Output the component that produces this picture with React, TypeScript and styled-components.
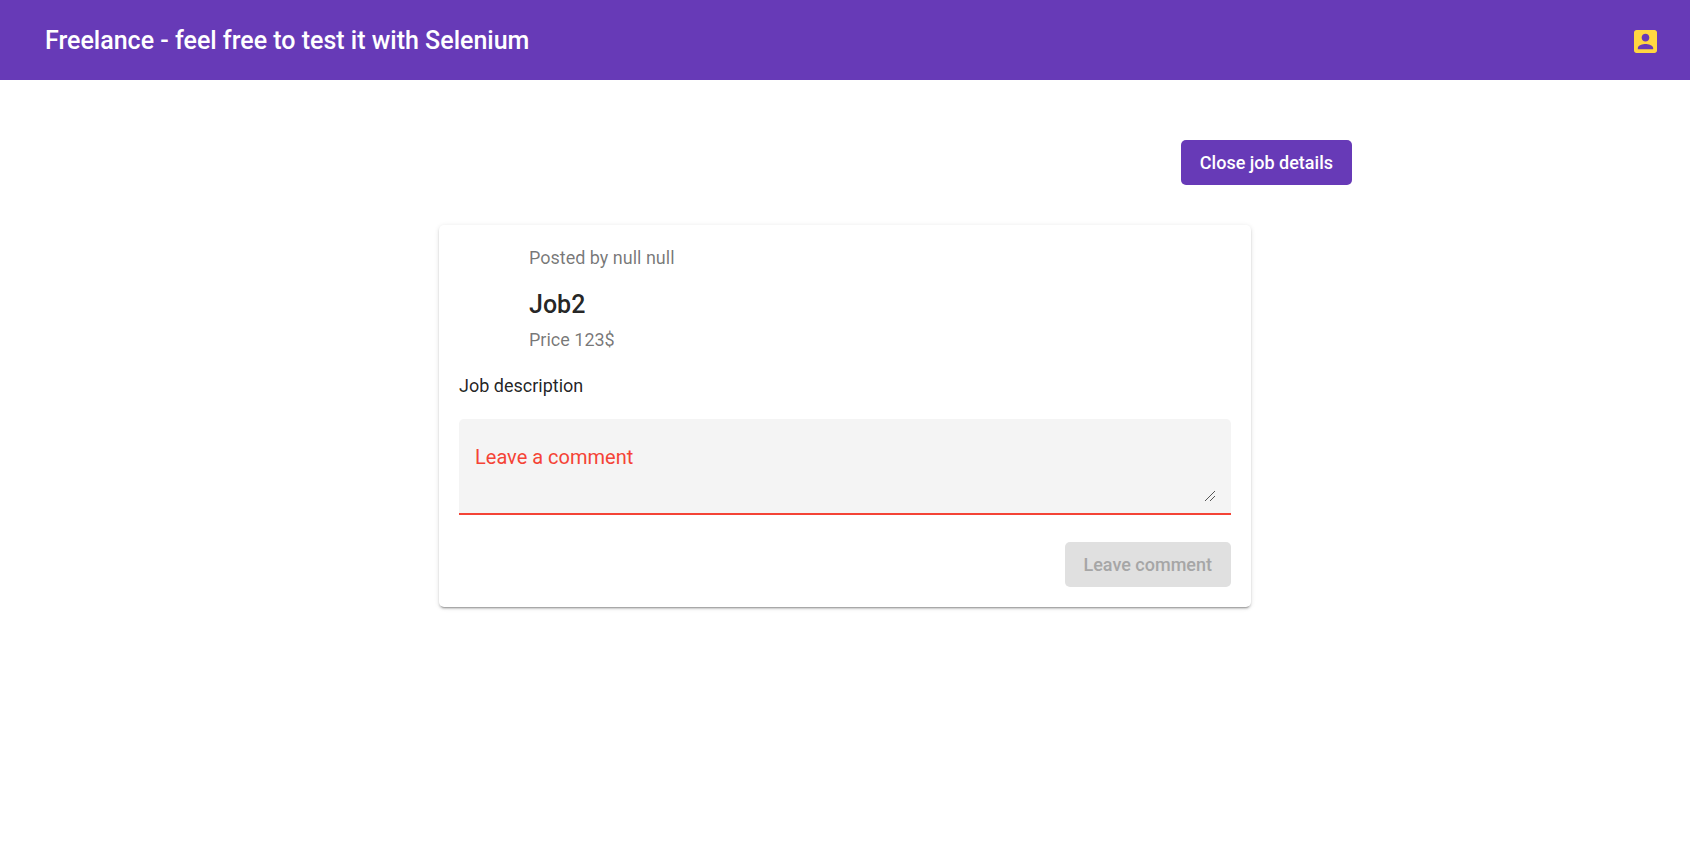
import React, { useState } from "react";
import styled, { createGlobalStyle } from "styled-components";

const GlobalStyle = createGlobalStyle`
  *, *::before, *::after { box-sizing: border-box; }
  body {
    margin: 0;
    background: #fff;
    color: rgba(0, 0, 0, 0.87);
    font-family: Roboto, "Liberation Sans", sans-serif;
  }
`;

const Toolbar = styled.header`
  display: flex;
  align-items: center;
  justify-content: space-between;
  height: 80px;
  padding: 2px 33px 0 45px;
  background: #673ab7;
  color: #fff;
`;

const Title = styled.h1`
  margin: 0;
  font-size: 25px;
  font-weight: 500;
  line-height: 40px;
`;

const IconButton = styled.button`
  display: flex;
  padding: 0;
  border: 0;
  background: none;
  color: #ffd740;
  cursor: pointer;
`;

const Main = styled.main`
  display: flex;
  flex-direction: column;
  gap: 40px;
  padding: 60px 20px;
`;

const Actions = styled.div<{ $inset?: boolean }>`
  display: flex;
  justify-content: flex-end;
  padding-right: ${({ $inset }) => ($inset ? "calc(20vw - 20px)" : "0")};
`;

const Button = styled.button`
  height: 45px;
  padding: 0 19px;
  border: 0;
  border-radius: 5px;
  background: #673ab7;
  color: #fff;
  font-family: inherit;
  font-size: 18px;
  font-weight: 500;
  line-height: 45px;
  white-space: nowrap;
  cursor: pointer;

  &:disabled {
    background: #e0e0e0;
    color: #a6a6a6;
    cursor: default;
  }
`;

const Card = styled.article`
  width: 100%;
  max-width: 812px;
  margin: 0 auto;
  padding: 20px;
  border-radius: 5px;
  box-shadow:
    0 3px 1px -2px rgba(0, 0, 0, 0.2),
    0 2px 2px 0 rgba(0, 0, 0, 0.14),
    0 1px 5px 0 rgba(0, 0, 0, 0.12);
`;

const CardHeader = styled.header`
  padding-left: 70px;
`;

const Subtitle = styled.p`
  margin: 0;
  color: rgba(0, 0, 0, 0.54);
  font-size: 18px;
  font-weight: 400;
  line-height: 26px;
`;

const JobTitle = styled.h2`
  margin: 14px 0 2px;
  font-size: 25px;
  font-weight: 500;
  line-height: 40px;
`;

const Description = styled.p`
  margin: 20px 0;
  font-size: 18px;
  font-weight: 400;
  line-height: 26px;
`;

const Field = styled.div`
  position: relative;
  display: flex;
  height: 96px;
  margin-bottom: 27px;
  padding: 28px 16px 12px;
  border-bottom: 2px solid #f44336;
  border-radius: 5px 5px 0 0;
  background: #f4f4f4;
`;

const FieldLabel = styled.label`
  position: absolute;
  top: 24px;
  left: 16px;
  color: #f44336;
  font-size: 20px;
  line-height: 28px;
  pointer-events: none;
`;

const TextArea = styled.textarea`
  flex: 1;
  min-width: 0;
  padding: 0;
  border: 0;
  outline: 0;
  background: none;
  color: inherit;
  font-family: inherit;
  font-size: 20px;
  line-height: 28px;
  resize: vertical;

  &::-webkit-resizer {
    background: transparent;
  }
`;

const Grip = styled.svg`
  position: absolute;
  right: 16px;
  bottom: 12px;
  pointer-events: none;
`;

function AccountIcon() {
  return (
    <svg width="23" height="23" viewBox="3 3 18 18" fill="currentColor" aria-hidden="true">
      <path d="M3 5v14c0 1.100.89 2 2 2h14c1.100 0 2-.9 2-2V5c0-1.100-.9-2-2-2H5c-1.110 0-2 .9-2 2zm12 4c0 1.660-1.340 3-3 3s-3-1.340-3-3 1.340-3 3-3 3 1.340 3 3zm-9 8c0-2 4-3.100 6-3.100s6 1.100 6 3.100v1H6v-1z" />
    </svg>
  );
}

export default function App() {
  const [comment, setComment] = useState("");

  return (
    <>
      <GlobalStyle />
      <Toolbar>
        <Title>Freelance - feel free to test it with Selenium</Title>
        <IconButton type="button" aria-label="Account">
          <AccountIcon />
        </IconButton>
      </Toolbar>
      <Main>
        <Actions $inset>
          <Button type="button">Close job details</Button>
        </Actions>
        <Card>
          <CardHeader>
            <Subtitle>Posted by null null</Subtitle>
            <JobTitle>Job2</JobTitle>
            <Subtitle>Price 123$</Subtitle>
          </CardHeader>
          <Description>Job description</Description>
          <Field>
            <TextArea id="comment" value={comment} onChange={(e) => setComment(e.target.value)} />
            {comment === "" && <FieldLabel htmlFor="comment">Leave a comment</FieldLabel>}
            <Grip width="10" height="10" viewBox="0 0 10 10" stroke="#555" aria-hidden="true">
              <path d="M0 10L10 0M5 10l5-5" />
            </Grip>
          </Field>
          <Actions>
            <Button type="button" disabled={comment === ""}>
              Leave comment
            </Button>
          </Actions>
        </Card>
      </Main>
    </>
  );
}
